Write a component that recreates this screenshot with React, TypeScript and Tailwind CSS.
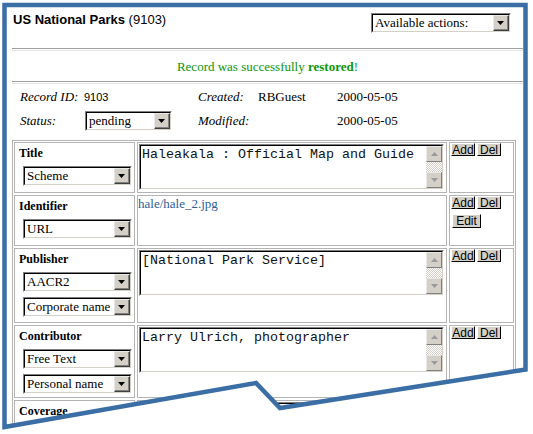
import React from "react";

const serif = "font-['Liberation_Serif',serif]";
const sans = "font-['Liberation_Sans',Arial,sans-serif]";
const mono = "font-['Liberation_Mono','Courier_New',monospace]";

function Arrow({ color = "#000" }: { color?: string }) {
  return (
    <svg width="7" height="4" viewBox="0 0 7 4">
      <path d="M0 0h7L3.5 4z" fill={color} />
    </svg>
  );
}

function DropButton() {
  return (
    <div className="flex h-full w-[16px] shrink-0 border border-t-[#e8e8e8] border-l-[#e8e8e8] border-r-[#404040] border-b-[#404040] bg-[#d4d0c8]">
      <div className="flex flex-1 items-center justify-center border-r border-b border-[#808080]">
        <Arrow />
      </div>
    </div>
  );
}

function Select({ value, className }: { value: string; className: string }) {
  return (
    <div className={`flex h-[20px] border border-t-[#808080] border-l-[#808080] border-r-white border-b-white ${className}`}>
      <div className="flex flex-1 items-stretch overflow-hidden border border-t-black border-l-black border-r-[#d4d0c8] border-b-[#d4d0c8] bg-white">
        <span className={`flex-1 truncate pl-[2px] text-[13px] leading-[16px] text-black ${serif}`}>{value}</span>
        <DropButton />
      </div>
    </div>
  );
}

function TextArea({ value, className }: { value: string; className: string }) {
  return (
    <div className={`flex border border-t-[#808080] border-l-[#808080] border-r-white border-b-white ${className}`}>
      <div className="flex flex-1 border border-t-black border-l-black border-r-[#d4d0c8] border-b-[#d4d0c8] bg-white">
        <div className={`flex-1 whitespace-pre px-[1px] pt-[1px] text-[13.33px] leading-[16px] text-[#111] ${mono}`}>{value}</div>
        <div className="flex w-[16px] flex-col bg-[repeating-conic-gradient(#d4d0c8_0_25%,#ffffff_0_50%)] bg-[length:2px_2px]">
          <div className="flex h-[16px] items-center justify-center border border-t-[#e8e8e8] border-l-[#e8e8e8] border-r-[#808080] border-b-[#808080] bg-[#d4d0c8]">
            <div className="rotate-180">
              <Arrow color="#9a9a9a" />
            </div>
          </div>
          <div className="flex-1" />
          <div className="flex h-[16px] items-center justify-center border border-t-[#e8e8e8] border-l-[#e8e8e8] border-r-[#808080] border-b-[#808080] bg-[#d4d0c8]">
            <Arrow color="#9a9a9a" />
          </div>
        </div>
      </div>
    </div>
  );
}

function Btn({ label, className = "" }: { label: string; className?: string }) {
  return (
    <div className={`flex h-[13px] items-center justify-center border border-t-white border-l-white border-r-black border-b-black bg-[#d4d0c8] text-[12px] leading-[12px] text-black ${sans} ${className}`}>
      {label}
    </div>
  );
}

const cell = "border border-[#b4b4b4] bg-white";

function Buttons({ edit }: { edit?: boolean }) {
  return (
    <div className={`${cell} pl-[1px]`}>
      <div className="flex gap-[2px]">
        <Btn label="Add" className="w-[24px]" />
        <Btn label="Del" className="w-[24px]" />
      </div>
      {edit && <Btn label="Edit" className="mt-[5px] ml-[1px] h-[14px] w-[29px]" />}
    </div>
  );
}

function Label({ text }: { text: string }) {
  return <div className={`pl-[4px] pt-[3px] text-[12px] leading-[14px] font-bold text-black ${serif}`}>{text}</div>;
}

export default function App() {
  return (
    <div className="relative h-[434px] w-[533px] overflow-hidden bg-white">
      <div className="h-full bg-white [clip-path:polygon(0_0,533px_0,533px_369px,280px_408px,256px_383px,0_428px)]">
        <div className="pl-[12px] pr-[10px]">
          {/* header */}
          <div className="flex h-[48px] items-start justify-between pt-[12px] pl-[1px] pr-[12px]">
            <div className={`text-[13px] leading-[16px] text-black ${sans}`}>
              <span className="font-bold">US National Parks</span> (9103)
            </div>
            <Select value="Available actions:" className="mt-[1px] w-[140px]" />
          </div>
          <div className="h-[3px] border-t border-b border-t-[#a0a0a0] border-b-[#e4e4e4]" />
          <div className={`flex h-[30px] items-center justify-center pt-[1px] text-[13px] text-[#0a960a] ${serif}`}>
            <span>
              Record was successfully <b>restored</b>!
            </span>
          </div>
          <div className="h-[3px] border-t border-b border-t-[#a0a0a0] border-b-[#e4e4e4]" />

          {/* record info */}
          <div className={`grid grid-cols-[64px_114px_60px_79px_auto] grid-rows-[24px_24px] items-center pl-[8px] pt-[1px] text-[13px] text-black ${serif}`}>
            <i>Record ID:</i>
            <span className={`text-[11px] ${sans}`}>9103</span>
            <i>Created:</i>
            <span>RBGuest</span>
            <span>2000-05-05</span>
            <i>Status:</i>
            <Select value="pending" className="ml-[1px] w-[87px]" />
            <i>Modified:</i>
            <span />
            <span>2000-05-05</span>
          </div>

          {/* fields table */}
          <div className="mt-[7px] w-[504px] border border-[#b4b4b4] p-[1px]">
            <div className="grid grid-cols-[121px_310px_65px] grid-rows-[51px_51px_75px_73px_60px] gap-[2px]">
              <div className={cell}>
                <Label text="Title" />
                <Select value="Scheme" className="ml-[8px] mt-[6px] w-[109px]" />
              </div>
              <div className={`${cell} pl-[1px] pt-[1px]`}>
                <TextArea value="Haleakala : Official Map and Guide" className="h-[46px] w-[305px]" />
              </div>
              <Buttons />

              <div className={cell}>
                <Label text="Identifier" />
                <Select value="URL" className="ml-[8px] mt-[6px] w-[109px]" />
              </div>
              <div className={cell}>
                <div className={`text-[13px] leading-[15px] text-[#2a5d9c] ${serif}`}>hale/hale_2.jpg</div>
              </div>
              <Buttons edit />

              <div className={cell}>
                <Label text="Publisher" />
                <Select value="AACR2" className="ml-[8px] mt-[6px] w-[109px]" />
                <Select value="Corporate name" className="ml-[8px] mt-[5px] w-[109px]" />
              </div>
              <div className={`${cell} pl-[1px] pt-[1px]`}>
                <TextArea value="[National Park Service]" className="h-[46px] w-[305px]" />
              </div>
              <Buttons />

              <div className={cell}>
                <Label text="Contributor" />
                <Select value="Free Text" className="ml-[8px] mt-[6px] w-[109px]" />
                <Select value="Personal name" className="ml-[8px] mt-[5px] w-[109px]" />
              </div>
              <div className={`${cell} pl-[1px] pt-[1px]`}>
                <TextArea value="Larry Ulrich, photographer" className="h-[46px] w-[305px]" />
              </div>
              <Buttons />

              <div className={cell}>
                <Label text="Coverage" />
              </div>
              <div className={`${cell} pl-[1px] pt-[1px]`}>
                <TextArea value="" className="h-[46px] w-[305px]" />
              </div>
              <Buttons />
            </div>
          </div>
        </div>
      </div>

      {/* torn frame outline */}
      <svg className="pointer-events-none absolute inset-0" width="533" height="434" viewBox="0 0 533 434">
        <path
          d="M4.5 5H525.5V369.5L280 408L256 383L4.5 427Z"
          fill="none"
          stroke="#3a6ea5"
          strokeWidth="4.5"
          strokeLinejoin="miter"
        />
      </svg>
    </div>
  );
}
